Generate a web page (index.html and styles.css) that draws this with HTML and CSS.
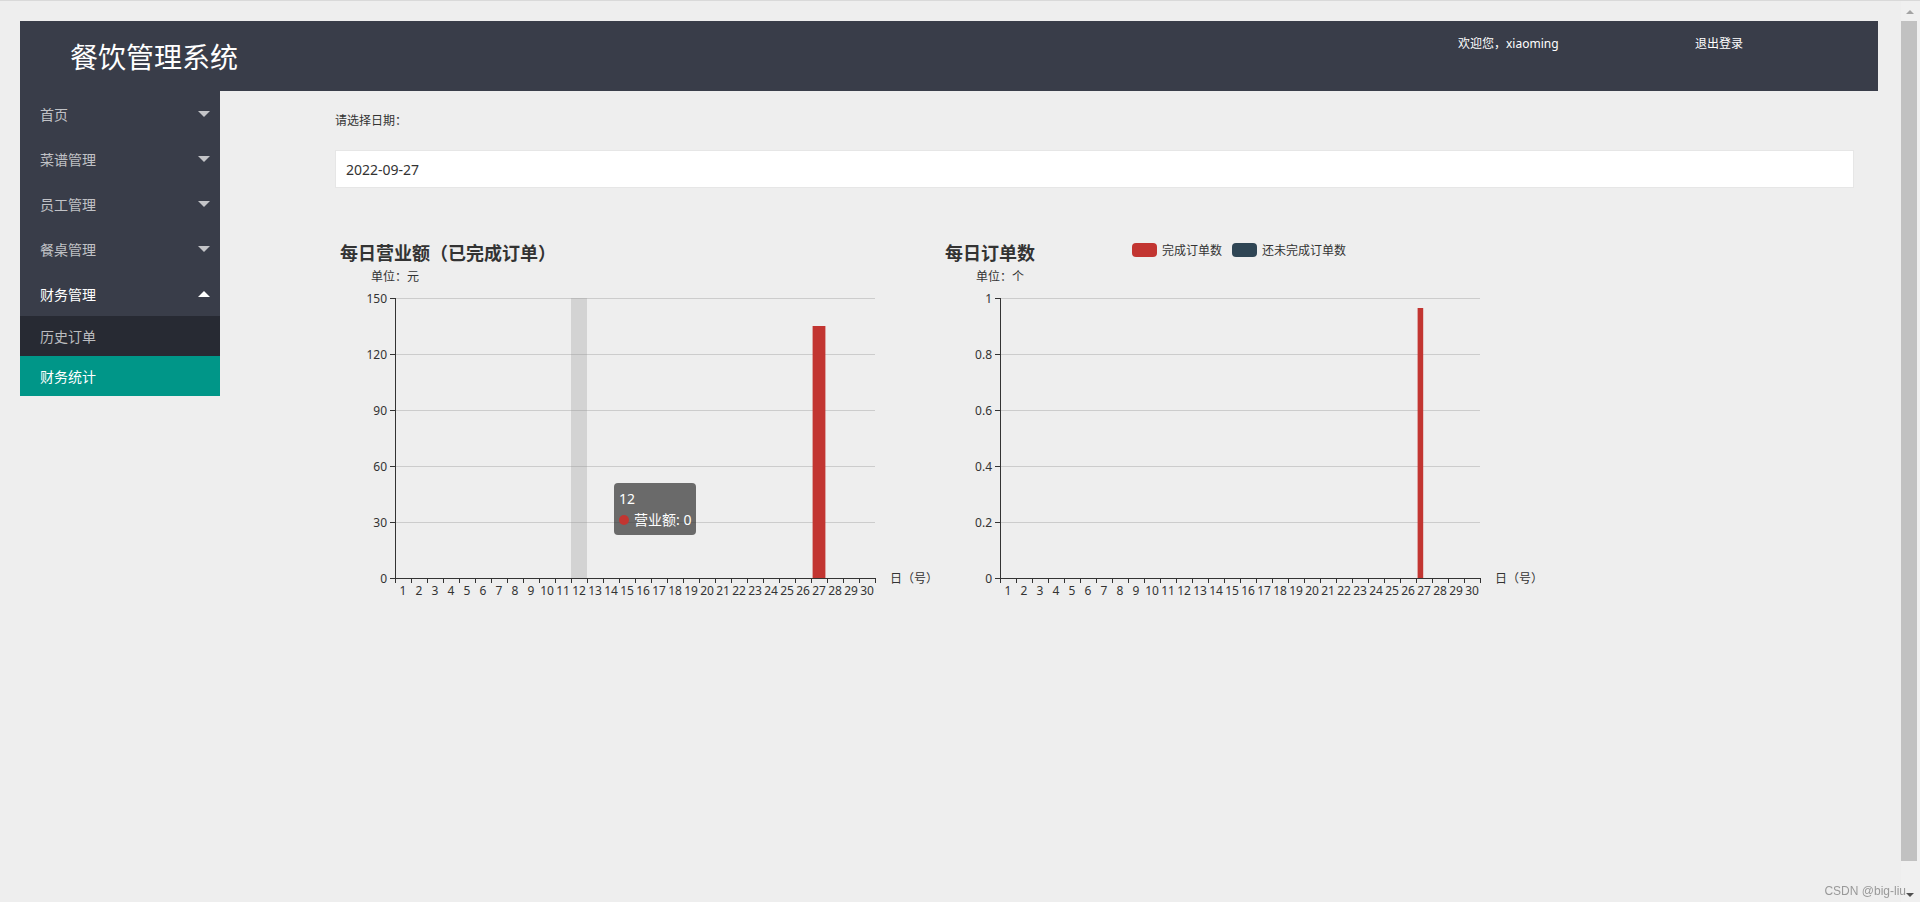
FILE: index.html
```html
<!DOCTYPE html>
<html lang="zh-CN">
<head>
<meta charset="utf-8">
<title>餐饮管理系统</title>
<link rel="stylesheet" href="styles.css">
</head>
<body>
<div class="page">
  <header class="header">
    <div class="logo">餐饮管理系统</div>
    <ul class="hdr-nav">
      <li class="hdr-item welcome">欢迎您，xiaoming</li>
      <li class="hdr-item logout"><a href="#">退出登录</a></li>
    </ul>
  </header>
  <div class="layout">
    <nav class="side">
      <ul class="nav-tree">
        <li class="nav-item"><a class="nav-link" href="#">首页<span class="caret down"></span></a></li>
        <li class="nav-item"><a class="nav-link" href="#">菜谱管理<span class="caret down"></span></a></li>
        <li class="nav-item"><a class="nav-link" href="#">员工管理<span class="caret down"></span></a></li>
        <li class="nav-item"><a class="nav-link" href="#">餐桌管理<span class="caret down"></span></a></li>
        <li class="nav-item open"><a class="nav-link" href="#">财务管理<span class="caret up"></span></a>
          <ul class="child">
            <li class="child-item"><a class="child-link" href="#">历史订单</a></li>
            <li class="child-item this"><a class="child-link" href="#">财务统计</a></li>
          </ul>
        </li>
      </ul>
    </nav>
    <main class="main">
      <div class="form-label">请选择日期：</div>
      <input class="date-input" type="text" value="2022-09-27">
      <div class="charts">
        <div class="chart">
          <svg width="600" height="400" viewBox="0 0 600 400">
            <defs>
              <g id="grid">
                <path d="M60 60.5H540M60 116.5H540M60 172.5H540M60 228.5H540M60 284.5H540" stroke="#cccccc" stroke-width="1" fill="none"/>
              </g>
              <g id="axes">
                <path d="M60.5 60V341M60 340.5H541" stroke="#333" stroke-width="1" fill="none"/>
                <path d="M55 60.5h5M55 116.5h5M55 172.5h5M55 228.5h5M55 284.5h5M55 340.5h5" stroke="#333" stroke-width="1" fill="none"/>
                <path d="M60.5 340v5M76.5 340v5M92.5 340v5M108.5 340v5M124.5 340v5M140.5 340v5M156.5 340v5M172.5 340v5M188.5 340v5M204.5 340v5M220.5 340v5M236.5 340v5M252.5 340v5M268.5 340v5M284.5 340v5M300.5 340v5M316.5 340v5M332.5 340v5M348.5 340v5M364.5 340v5M380.5 340v5M396.5 340v5M412.5 340v5M428.5 340v5M444.5 340v5M460.5 340v5M476.5 340v5M492.5 340v5M508.5 340v5M524.5 340v5M540.5 340v5" stroke="#333" stroke-width="1" fill="none"/>
                <g class="c-lbl" text-anchor="middle">
                  <text x="68" y="352" dominant-baseline="central">1</text>
                  <text x="84" y="352" dominant-baseline="central">2</text>
                  <text x="100" y="352" dominant-baseline="central">3</text>
                  <text x="116" y="352" dominant-baseline="central">4</text>
                  <text x="132" y="352" dominant-baseline="central">5</text>
                  <text x="148" y="352" dominant-baseline="central">6</text>
                  <text x="164" y="352" dominant-baseline="central">7</text>
                  <text x="180" y="352" dominant-baseline="central">8</text>
                  <text x="196" y="352" dominant-baseline="central">9</text>
                  <text x="212" y="352" dominant-baseline="central">10</text>
                  <text x="228" y="352" dominant-baseline="central">11</text>
                  <text x="244" y="352" dominant-baseline="central">12</text>
                  <text x="260" y="352" dominant-baseline="central">13</text>
                  <text x="276" y="352" dominant-baseline="central">14</text>
                  <text x="292" y="352" dominant-baseline="central">15</text>
                  <text x="308" y="352" dominant-baseline="central">16</text>
                  <text x="324" y="352" dominant-baseline="central">17</text>
                  <text x="340" y="352" dominant-baseline="central">18</text>
                  <text x="356" y="352" dominant-baseline="central">19</text>
                  <text x="372" y="352" dominant-baseline="central">20</text>
                  <text x="388" y="352" dominant-baseline="central">21</text>
                  <text x="404" y="352" dominant-baseline="central">22</text>
                  <text x="420" y="352" dominant-baseline="central">23</text>
                  <text x="436" y="352" dominant-baseline="central">24</text>
                  <text x="452" y="352" dominant-baseline="central">25</text>
                  <text x="468" y="352" dominant-baseline="central">26</text>
                  <text x="484" y="352" dominant-baseline="central">27</text>
                  <text x="500" y="352" dominant-baseline="central">28</text>
                  <text x="516" y="352" dominant-baseline="central">29</text>
                  <text x="532" y="352" dominant-baseline="central">30</text>
                </g>
                <text class="c-lbl" x="555" y="340" dominant-baseline="central">日（号）</text>
              </g>
            </defs>
            <text class="c-title" x="5" y="14" dominant-baseline="central">每日营业额（已完成订单）</text>
            <text class="c-lbl" x="60" y="38" text-anchor="middle" dominant-baseline="central">单位：元</text>
            <use href="#grid"/>
            <rect x="236" y="60" width="16" height="280" fill="rgba(150,150,150,0.3)"/>
            <rect x="477.6" y="88" width="12.8" height="252" fill="#c23531"/>
            <use href="#axes"/>
            <g class="c-lbl" text-anchor="end">
              <text x="52" y="60" dominant-baseline="central">150</text>
              <text x="52" y="116" dominant-baseline="central">120</text>
              <text x="52" y="172" dominant-baseline="central">90</text>
              <text x="52" y="228" dominant-baseline="central">60</text>
              <text x="52" y="284" dominant-baseline="central">30</text>
              <text x="52" y="340" dominant-baseline="central">0</text>
            </g>
          </svg>
          <div class="tooltip">
            <div class="tt-line">12</div>
            <div class="tt-line"><span class="tt-dot"></span>营业额: 0</div>
          </div>
        </div>
        <div class="chart">
          <svg width="600" height="400" viewBox="0 0 600 400">
            <text class="c-title" x="5" y="14" dominant-baseline="central">每日订单数</text>
            <rect x="192" y="5" width="25" height="14" rx="4" fill="#c23531"/>
            <text class="c-lbl" x="222" y="12" dominant-baseline="central">完成订单数</text>
            <rect x="292" y="5" width="25" height="14" rx="4" fill="#2f4554"/>
            <text class="c-lbl" x="322" y="12" dominant-baseline="central">还未完成订单数</text>
            <text class="c-lbl" x="60" y="38" text-anchor="middle" dominant-baseline="central">单位：个</text>
            <use href="#grid"/>
            <rect x="477.6" y="70" width="5.6" height="270" fill="#c23531"/>
            <use href="#axes"/>
            <g class="c-lbl" text-anchor="end">
              <text x="52" y="60" dominant-baseline="central">1</text>
              <text x="52" y="116" dominant-baseline="central">0.8</text>
              <text x="52" y="172" dominant-baseline="central">0.6</text>
              <text x="52" y="228" dominant-baseline="central">0.4</text>
              <text x="52" y="284" dominant-baseline="central">0.2</text>
              <text x="52" y="340" dominant-baseline="central">0</text>
            </g>
          </svg>
        </div>
      </div>
    </main>
  </div>
</div>
<div class="scrollbar">
  <span class="sb-up"></span>
  <span class="sb-thumb"></span>
  <span class="sb-down"></span>
</div>
<div class="watermark">CSDN @big-liu</div>
</body>
</html>
```

FILE: styles.css
```css
* { box-sizing: border-box; }
html, body { margin: 0; padding: 0; }
body {
  background: #eeeeee;
  border-top: 1px solid #d9d9d9;
  min-height: 902px;
  font-family: "Noto Sans", "Noto Sans CJK SC", sans-serif;
  color: #333;
}
.page { padding: 20px 42px 0 20px; }

.header {
  height: 70px;
  background: #393d49;
  display: flex;
  align-items: center;
}
.logo {
  padding-left: 50px;
  font-size: 28px;
  line-height: 1;
  color: #fff;
  font-family: "Noto Sans CJK SC", sans-serif;
}
.hdr-nav {
  list-style: none;
  margin: 14px 0 0 auto;
  padding: 0;
  display: flex;
  align-self: flex-start;
}
.hdr-item { font-size: 12px; line-height: 18px; color: #fff; }
.hdr-item.welcome { width: 237px; }
.hdr-item.logout { width: 183px; }
.hdr-item a { color: #fff; text-decoration: none; }

.layout { display: flex; align-items: flex-start; }
.side { width: 200px; flex: none; background: #393d49; }
.nav-tree, .child { list-style: none; margin: 0; padding: 0; }
.nav-link {
  display: flex;
  align-items: center;
  justify-content: space-between;
  height: 45px;
  padding: 0 10px 0 20px;
  font-size: 14px;
  color: rgba(255,255,255,.7);
  text-decoration: none;
  font-family: "Noto Sans CJK SC", sans-serif;
}
.nav-item.open > .nav-link { color: #fff; }
.caret {
  width: 0;
  height: 0;
  border-left: 6px solid transparent;
  border-right: 6px solid transparent;
}
.caret.down { border-top: 6px solid rgba(255,255,255,.7); }
.caret.up { border-bottom: 6px solid #fff; }
.child { background: rgba(0,0,0,.3); }
.child-link {
  display: flex;
  align-items: center;
  height: 40px;
  padding-left: 20px;
  font-size: 14px;
  color: rgba(255,255,255,.7);
  text-decoration: none;
  font-family: "Noto Sans CJK SC", sans-serif;
}
.child-item.this .child-link { background: #009688; color: #fff; }

.main { flex: 1; min-width: 0; padding: 21px 24px 0 115px; }
.form-label { font-size: 12px; line-height: 18px; color: #333; }
.date-input {
  display: block;
  width: 100%;
  height: 38px;
  margin: 20px 0 0;
  padding: 0 10px;
  border: 1px solid #e6e6e6;
  background: #fff;
  font-family: "Noto Sans", sans-serif;
  font-size: 14px;
  color: #333;
  outline: none;
}
.charts { display: flex; gap: 5px; margin-top: 50px; }
.chart { position: relative; width: 600px; height: 400px; flex: none; }
.chart svg { display: block; }
.c-title { font-family: "Noto Sans CJK SC", sans-serif; font-size: 18px; font-weight: bold; fill: #333; }
.c-lbl { font-family: "Noto Sans", "Noto Sans CJK SC", sans-serif; font-size: 12px; fill: #333; }

.tooltip {
  position: absolute;
  left: 279px;
  top: 245px;
  padding: 5px;
  border-radius: 4px;
  background: rgba(50,50,50,0.7);
  color: #fff;
  font-size: 14px;
  line-height: 21px;
  font-family: "Noto Sans", "Noto Sans CJK SC", sans-serif;
  white-space: nowrap;
}
.tt-line { display: flex; align-items: center; }
.tt-dot {
  display: inline-block;
  width: 10px;
  height: 10px;
  border-radius: 50%;
  background: #c23531;
  margin-right: 5px;
}

.scrollbar {
  position: fixed;
  top: 1px;
  right: 0;
  bottom: 0;
  width: 19px;
  background: #f0f0f0;
}
.sb-up {
  position: absolute;
  top: 9px;
  left: 5px;
  width: 0;
  height: 0;
  border-left: 4px solid transparent;
  border-right: 4px solid transparent;
  border-bottom: 4px solid #a3a3a3;
}
.sb-thumb {
  position: absolute;
  top: 20px;
  left: 0;
  width: 16px;
  height: 840px;
  background: #c1c1c1;
}
.sb-down {
  position: absolute;
  bottom: 5px;
  left: 5px;
  width: 0;
  height: 0;
  border-left: 4px solid transparent;
  border-right: 4px solid transparent;
  border-top: 4px solid #505050;
}
.watermark {
  position: fixed;
  right: 14px;
  bottom: 4px;
  font-family: "Liberation Sans", sans-serif;
  font-size: 12px;
  line-height: 14px;
  color: #999;
}
```
